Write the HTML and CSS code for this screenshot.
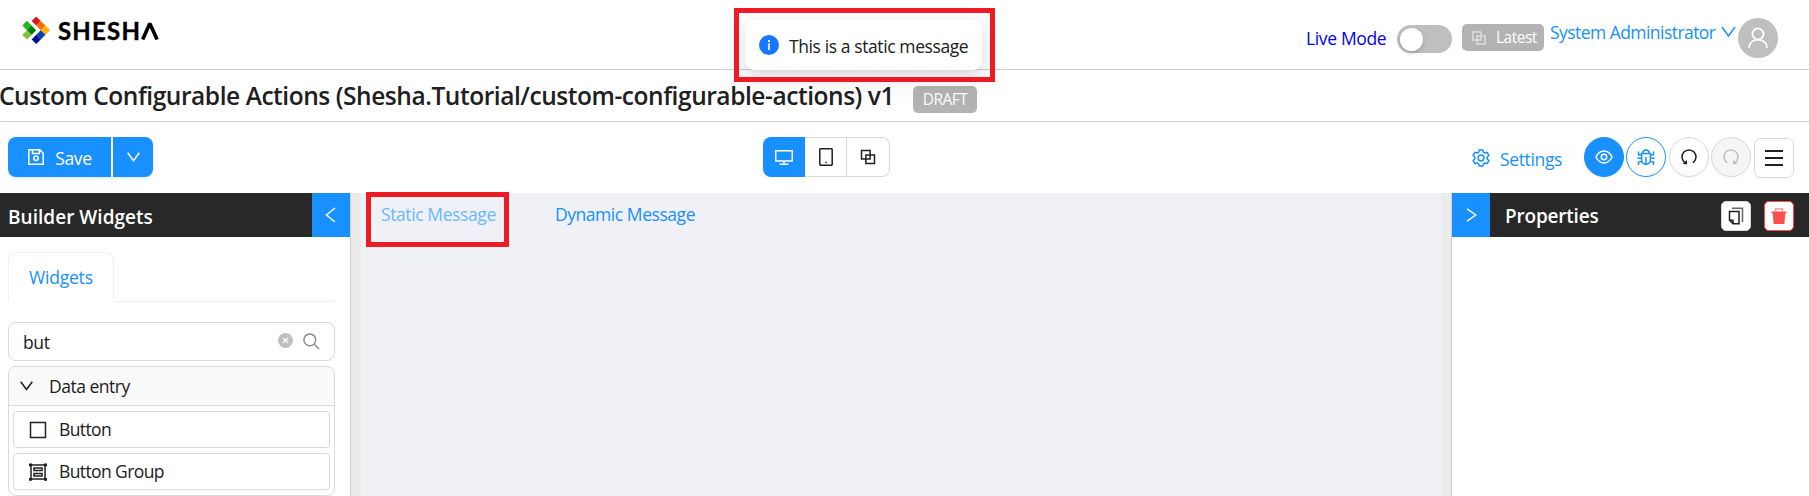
FILE: index.html
```html
<!DOCTYPE html>
<html lang="en">
<head>
<meta charset="utf-8">
<title>Custom Configurable Actions</title>
<link rel="stylesheet" href="styles.css">
</head>
<body>
<header class="topbar">
  <div class="logo">
    <svg width="28" height="28" viewBox="0 0 28 28" class="mark"><g transform="translate(14.200 .4)"><path fill="#d7181e" d="M0 0l4.600 4.600-4.600 4.600-4.600-4.600z"/><path fill="#ff6a00" d="M4.600 4.600l4.600 4.600-4.600 4.600L0 9.200z"/><path fill="#ffb400" d="M9.200 9.200l4.600 4.600-4.600 4.600-4.600-4.600z"/><path fill="#0a3fb0" d="M4.600 13.800l4.600 4.600-4.600 4.600L0 18.400z"/><path fill="#00108c" d="M0 18.400l4.600 4.600L0 27.600l-4.600-4.600z"/><path fill="#27b31b" d="M-9.200 4.400l4.700 4.700-4.700 4.700-4.700-4.700z"/><path fill="#008000" d="M-4.700 9.100L0 13.800l-4.700 4.700-4.600-4.700z"/><path fill="#7cc43c" d="M-9.200 13.800l4.600 4.700-4.600 4.600-4.700-4.600z"/></g></svg>
    <span class="word">SHESH</span><svg class="lambda" width="18" height="18" viewBox="0 0 18 18"><path fill="none" stroke="#000" stroke-width="3.600" stroke-linejoin="bevel" d="M1.700 17.500L8.800 1.400l7.300 16.100"/></svg>
  </div>
  <div class="account">
    <span class="live t">Live Mode</span>
    <span class="switch"></span>
    <span class="tag latest"><svg width="14" height="14" viewBox="0 0 14 14" class="ln"><path d="M.9.900h8v8h-8zM5.100 5.100h8v8h-8z"/></svg><span class="t">Latest</span></span>
    <span class="user t">System Administrator</span>
    <svg class="ln chev" width="15" height="12" viewBox="0 0 15 12"><path d="M1 1l6.500 9L14 1"/></svg>
    <span class="avatar"><svg class="ln" width="22" height="22" viewBox="0 0 22 22"><circle cx="11" cy="7" r="5.600"/><path d="M2 21c0-5 4-8.400 9-8.400s9 3.400 9 8.400"/></svg></span>
  </div>
</header>
<div class="titlebar"><h1 class="t">Custom Configurable Actions (Shesha.Tutorial/custom-configurable-actions) v1</h1><span class="tag draft"><span class="t">DRAFT</span></span></div>
<div class="toolbar">
  <div class="side">
    <button class="save"><svg class="ln" width="16" height="16" viewBox="0 0 16 16"><path d="M.8.800h11l3.400 3.400v11H.8zM4.500.800v3.600h6.800V.800"/><circle cx="8" cy="9.300" r="2.200"/></svg><span class="t">Save</span></button>
    <button class="more"><svg class="ln" width="13" height="10" viewBox="0 0 13 10"><path d="M.7.700l5.800 8 5.800-8"/></svg></button>
  </div>
  <div class="devices">
    <button class="on"><svg class="ln" width="18" height="15" viewBox="0 0 18 15"><path d="M.7.700h16.600v10.300H.7zM9 11v3M4.500 14.200h9"/></svg></button>
    <button><svg class="ln" width="14" height="18" viewBox="0 0 14 18"><rect x=".8" y=".8" width="12.400" height="16.400" rx=".7"/><path d="M6.300 14.400h1.400"/></svg></button>
    <button><svg class="ln" width="16" height="16" viewBox="0 0 16 16"><path d="M1.500 1.500h8.600v8.600H1.500zM5.900 5.900h8.600v8.600H5.900z"/></svg></button>
  </div>
  <div class="side right">
    <span class="settings"><svg class="ln" width="18" height="18" viewBox="0 0 18 18"><path stroke-linejoin="round" d="M7.200.900h3.600l.6 2.300 1.400.8 2.300-.7 1.800 3.100L15.200 8v2l1.700 1.600-1.800 3.100-2.300-.7-1.400.8-.6 2.300H7.200l-.6-2.300-1.400-.8-2.300.7-1.800-3.100L2.800 10V8L1.100 6.400l1.800-3.100 2.300.7 1.400-.8z"/><circle cx="9" cy="9" r="2.900"/></svg><span class="t">Settings</span></span>
    <button class="round solid"><svg class="ln" width="18" height="14" viewBox="0 0 18 14"><path d="M.9 7C3 3 5.500 1.100 9 1.100S15 3 17.100 7C15 11 12.500 12.900 9 12.900S3 11 .9 7z"/><circle cx="9" cy="7" r="2.700"/></svg></button>
    <button class="round bug"><svg class="ln" width="18" height="18" viewBox="0 0 18 18"><path d="M4.600 5.500h8.800v6.300a4.400 4.400 0 0 1-8.800 0zM5.800 5.300a3.200 3.200 0 0 1 6.400 0M9 9v7.500M1.500 3.500v3.300h3M16.500 3.500v3.300h-3M.5 10.300h4M17.500 10.300h-4M1.500 17v-2.900l3.300-.5M16.500 17v-2.900l-3.300-.5"/></svg></button>
    <button class="round undo"><svg class="ln" width="18" height="18" viewBox="0 0 18 18"><path d="M5.200 14.800A7 7 0 1 1 12.800 14.800"/><path class="fill" d="M2.500 15.900l4.700.4-.4-4.300z"/></svg></button>
    <button class="round redo"><svg class="ln" width="18" height="18" viewBox="0 0 18 18"><path d="M5.200 14.800A7 7 0 1 1 12.800 14.800"/><path class="fill" d="M15.500 15.900l-4.700.4.400-4.300z"/></svg></button>
    <button class="menu"><svg class="ln" width="18" height="16" viewBox="0 0 18 16"><path d="M0 1h18M0 8h18M0 15h18"/></svg></button>
  </div>
</div>
<main class="builder">
  <aside class="left">
    <div class="panel-head"><h2 class="t">Builder Widgets</h2><span class="toggle"><svg class="ln" width="11" height="16" viewBox="0 0 11 16"><path d="M10 1L1.500 8l8.500 7"/></svg></span></div>
    <div class="tabs"><span class="tab"><span class="t">Widgets</span></span></div>
    <div class="search"><span class="t query">but</span><svg width="15" height="15" viewBox="0 0 15 15"><circle cx="7.500" cy="7.500" r="7.500" fill="#bfbfbf"/><path d="M5 5l5 5M10 5l-5 5" stroke="#fff" stroke-width="1.300"/></svg><svg class="ln lens" width="17" height="17" viewBox="0 0 17 17"><circle cx="6.800" cy="6.800" r="5.900"/><path d="M11 11l5 5"/></svg></div>
    <div class="group">
      <div class="group-head"><svg class="ln" width="13" height="10" viewBox="0 0 13 10"><path d="M.7.700l5.800 7.800 5.800-7.800"/></svg><span class="t">Data entry</span></div>
      <div class="items">
        <div class="item"><svg class="ln" width="18" height="18" viewBox="0 0 18 18"><path d="M1.500 1.500h15v15h-15z"/></svg><span class="t button">Button</span></div>
        <div class="item"><svg class="ln" width="18" height="18" viewBox="0 0 18 18"><path d="M2 2h14v14H2zM5 5h8v2.600H5zM5 10.400h8V13H5z"/><path class="fill" d="M0 .5h3v2.700H0zM15 .5h3v2.700h-3zM0 15h3v2.700H0zM15 15h3v2.700h-3z"/></svg><span class="t bgroup">Button Group</span></div>
      </div>
    </div>
  </aside>
  <section class="canvas"><a class="link static t">Static Message</a><a class="link dynamic t">Dynamic Message</a></section>
  <aside class="props">
    <div class="panel-head"><span class="toggle"><svg class="ln" width="11" height="14" viewBox="0 0 11 14"><path d="M1 .8L9.800 7 1 13.200"/></svg></span><h2 class="t">Properties</h2>
      <button class="mini"><svg class="ln" width="16" height="18" viewBox="0 0 16 18"><path d="M1.500 4.500h9.500v12.300H5l-3.500-3.500zM1.500 13.300H5v3.500"/><path class="back" d="M4 1.200h10.500V15"/></svg></button>
      <button class="mini danger"><svg width="16" height="16" viewBox="0 0 16 16"><path fill="#ff4d4f" d="M.5 3.500h15v1.700h-1.300L13.400 16H2.600L1.800 5.200H.5z"/><path d="M4.600 3.500V.9h6.800v2.600" fill="none" stroke="#ff4d4f" stroke-opacity=".65" stroke-width="1.400"/></svg></button>
    </div>
  </aside>
</main>
<div class="message"><svg width="20" height="20" viewBox="0 0 20 20"><circle cx="10" cy="10" r="10" fill="#1677ff"/><path fill="#fff" d="M9.200 8.300h1.600v6.600H9.200zM9 4.900h2v2H9z"/></svg><span class="t">This is a static message</span></div>
<div class="outline outline-message"></div>
<div class="outline outline-link"></div>
</body>
</html>
```
FILE: styles.css
```css
* { box-sizing: border-box; }
body { margin: 0; width: 1809px; height: 496px; overflow: hidden; position: relative; background: #fff; color: #202020; font: 17.5px/26px "Open Sans", "Noto Sans", sans-serif; display: flex; flex-direction: column; }
button { font: inherit; margin: 0; padding: 0; display: flex; align-items: center; justify-content: center; border: 1px solid #d9d9d9; background: #fff; color: #202020; flex: none; }
svg { flex: none; display: block; }
.t { white-space: nowrap; }
.ln { fill: none; stroke: currentColor; stroke-width: 1.5; }
.ln .fill { fill: currentColor; stroke: none; }
.topbar { height: 70px; border-bottom: 1px solid #d0d0d0; display: flex; justify-content: space-between; flex: none; }
.logo { display: flex; padding: 16px 0 0 22px; align-items: flex-start; }
.word { font: 700 24px/29px "Lato", sans-serif; letter-spacing: 1.2px; color: #000; margin-left: 8px; -webkit-text-stroke: .4px #000; }
.lambda { margin: 6px 0 0 0; }
.account { display: flex; align-items: flex-start; padding-right: 31px; }
.live { color: #00f; margin-top: 25px; width: 91px; letter-spacing: -.35px; }
.switch { width: 55px; height: 28px; border-radius: 14px; background: #bfbfbf; margin-top: 25px; }
.switch::before { content: ""; display: block; width: 23px; height: 23px; margin: 2.500px; border-radius: 50%; background: #fff; box-shadow: 0 2px 4px #00230b33; }
.tag { background: #b3b3b3; color: #fff; border-radius: 5px; height: 27px; display: flex; align-items: center; font-size: 15.5px; }
.tag .t { margin-top: -1px; }
.latest { width: 82px; margin: 24px 6px 0 10px; padding-left: 10px; gap: 10px; letter-spacing: -.5px; }
.latest svg { color: #dedede; }
.user { color: #1890ff; margin-top: 19px; width: 171px; letter-spacing: -.55px; }
.chev { color: #1890ff; margin: 26px 2px 0 0; }
.avatar { width: 40px; height: 40px; border-radius: 50%; background: #bfbfbf; color: #fff; margin-top: 18px; display: flex; align-items: center; justify-content: center; }
.avatar svg { stroke-width: 1.800; }
.titlebar { height: 52px; border-bottom: 1px solid #d0d0d0; display: flex; flex: none; }
h1 { margin: 9px 0 0 -1px; font-size: 24.500px; line-height: 34px; font-weight: 600; width: 914px; letter-spacing: -.45px; }
.draft { width: 64px; margin-top: 16px; justify-content: center; letter-spacing: -.5px; }
.toolbar { height: 71px; display: grid; grid-template-columns: 763px 127px 1fr; flex: none; }
.side { display: flex; padding: 15px 0 0 8px; }
.save, .more { background: #1890ff; border: 0; color: #fff; height: 40px; box-shadow: 0 2px 0 #0591ff1a; }
.save { width: 103px; border-radius: 8px 0 0 8px; gap: 11px; margin-right: 2px; letter-spacing: -.4px; }
.more { width: 40px; border-radius: 0 8px 8px 0; }
.save svg { margin-left: 1px; }
.save .t { padding-top: 1px; }
.devices { display: flex; margin-top: 15px; height: 40px; }
.devices button { width: 42px; border-left-width: 0; }
.devices button:last-child { width: 43px; border-radius: 0 8px 8px 0; }
.devices .on { background: #1890ff; color: #fff; border: 0; border-radius: 8px 0 0 8px; }
.right { justify-content: flex-end; padding-right: 15px; }
.settings { display: flex; color: #1890ff; gap: 10px; padding-top: 9px; width: 112px; letter-spacing: -.35px; }
.settings svg { margin-top: 3px; }
.round { width: 40px; height: 40px; border-radius: 50%; box-shadow: 0 2px 0 #00000005; }
.solid { background: #1890ff; border-color: #1890ff; color: #fff; margin-right: 2px; }
.bug { border-color: #1890ff; color: #1890ff; margin-right: 3px; }
.undo { margin-right: 2px; }
.redo { background: #f5f5f5; color: #bfbfbf; margin-right: 3px; }
.menu { width: 40px; height: 40px; border-radius: 7px; margin-top: 1px; box-shadow: 0 2px 0 #00000005; }
.menu svg { stroke-width: 2; }
.builder { flex: 1; display: flex; min-height: 0; }
.left { width: 351px; border-right: 1px solid #cfcfcf; flex: none; }
.panel-head { height: 44px; background: #282828; color: #fff; display: flex; align-items: center; }
h2 { margin: 0; flex: 1; font-size: 19px; font-weight: 600; line-height: 26px; padding: 3px 0 0 8px; letter-spacing: .03px; }
.toggle { width: 38px; align-self: stretch; background: #1890ff; display: flex; align-items: center; justify-content: center; margin-right: 1px; }
.left .toggle { margin-right: 0; padding-right: 1px; }
.tabs { height: 50px; margin: 15px 15px 0 8px; border-bottom: 1px solid #f0f0f0; display: flex; }
.tab { width: 106px; height: 50px; border: 1px solid #f0f0f0; border-bottom-color: #fff; border-radius: 8px 8px 0 0; color: #1890ff; padding: 11px 0 0 20px; letter-spacing: -.2px; }
.search { margin: 20px 15px 0 8px; height: 39px; border: 1px solid #d9d9d9; border-radius: 8px; display: flex; align-items: center; padding: 0 14px 0 14px; gap: 10px; }
.query { flex: 1; padding-top: 1px; letter-spacing: -.4px; }
.search svg { margin-bottom: 2px; }
.search .lens { color: #8c8c8c; margin-bottom: 0; }
.group { margin: 5px 15px 0 8px; border: 1px solid #d9d9d9; border-radius: 8px; height: 130px; overflow: hidden; }
.group-head { background: #fafafa; height: 39px; border-bottom: 1px solid #d9d9d9; display: flex; align-items: center; padding: 0 0 0 11px; gap: 16px; letter-spacing: -.5px; }
.group-head .t { padding-top: 0; }
.items { display: flex; flex-direction: column; gap: 5px; padding: 5px 4px; }
.item { height: 37px; border: 1px solid #d9d9d9; border-radius: 4px; display: flex; align-items: center; padding-left: 15px; gap: 12px; letter-spacing: -.6px; }
.item .t { margin-top: -1px; }
.canvas { flex: 1; background: #f0f1f6; border: solid #ebebeb; border-width: 0 10px; display: flex; align-items: flex-start; padding: 8px 0 0 20px; }
.link { color: #1890ff; letter-spacing: -.45px; }
.static { color: #69b8ff; width: 174px; letter-spacing: -.4px; }
.props { width: 358px; border-left: 1px solid #cfcfcf; flex: none; }
.props .panel-head { padding-right: 15px; }
.props h2 { padding: 2px 0 0 14px; letter-spacing: -.2px; }
.mini { width: 30px; height: 30px; border-radius: 5px; margin: 2px 0 0 13px; }
.mini .back { stroke: #666; }
.danger { border-color: #ff4d4f; }
.message { position: absolute; left: 745px; top: 20px; width: 237px; height: 50px; border-radius: 9px; background: #fff; display: flex; align-items: center; gap: 10px; padding-left: 14px; letter-spacing: -.4px; box-shadow: 0 6px 16px 0 #00000014, 0 3px 6px -4px #0000001f, 0 9px 28px 8px #0000000d; }
.message .t { padding-top: 1px; }
.outline { position: absolute; border: 5px solid #ed1c24; }
.outline-message { left: 734px; top: 8px; width: 261px; height: 74px; }
.outline-link { left: 366px; top: 192px; width: 143px; height: 55px; }
```
